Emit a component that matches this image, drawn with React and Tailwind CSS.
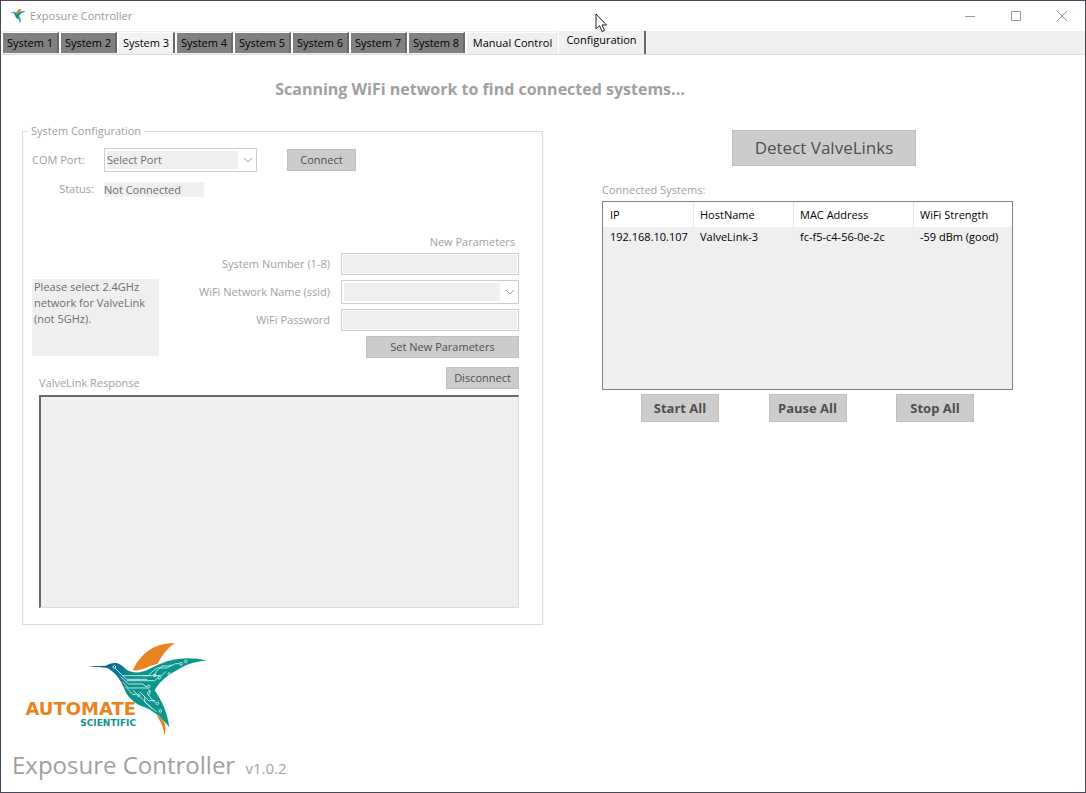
import React from "react";

const SYSTEMS = [1, 2, 3, 4, 5, 6, 7, 8];
const ACTIVE_SYSTEM = 3;

const DEVICES = [
  { ip: "192.168.10.107", host: "ValveLink-3", mac: "fc-f5-c4-56-0e-2c", wifi: "-59 dBm (good)" },
];

function Bird() {
  return (
    <g>
      <path d="M158 91C172 62 192 38 222 22C244 12 264 9 284 9C262 25 246 46 232 72C206 76 190 93 158 91Z" fill="#e8831f" />
      <path d="M229 226C246 234 256 246 256 260C257 270 255 280 254 287C250 264 244 246 229 226Z" fill="#e8831f" />
      <path
        d="M22 79L78 77C88 70 98 68 108 69C128 72 132 88 150 94C186 106 208 84 240 72C280 54 330 49 379 62C345 64 318 72 292 90C262 107 240 122 224 151C244 180 262 216 268 262C252 240 232 222 205 206C174 196 154 184 139 160C128 136 120 108 84 85C68 81 44 82 22 79Z"
        fill="url(#bird)"
      />
    </g>
  );
}

function BirdGradient() {
  return (
    <defs>
      <linearGradient id="bird" x1="22" y1="80" x2="200" y2="130" gradientUnits="userSpaceOnUse">
        <stop offset="0.3" stopColor="#0b669b" />
        <stop offset="0.8" stopColor="#0a958c" />
      </linearGradient>
    </defs>
  );
}

function Logo() {
  return (
    <svg width="200" height="96" viewBox="0 0 200 96" role="img" aria-label="Automate Scientific">
      <BirdGradient />
      <g transform="translate(70 -2) scale(0.3333)">
        <Bird />
        <g fill="none" stroke="#dff3f0" strokeWidth="2.5">
          <path d="M105 84L128 107H222L233 90L246 78H272L286 71H298" />
          <path d="M128 107L140 118H202" />
          <path d="M122 110L145 132H188L196 139H201" />
          <path d="M128 125L145 144H202L212 154H206" />
          <path d="M140 122H224L236 112" />
          <path d="M188 107H206L214 97L232 84H262L276 74" />
          <path d="M222 107H245L258 94" />
          <path d="M136 140L158 163H170" />
          <path d="M158 150L188 178L216 206" />
          <path d="M180 156L206 182H226" />
          <path d="M204 164L224 188" />
          <path d="M194 172V186L230 216" />
          <circle cx="103" cy="81" r="4" />
          <circle cx="303" cy="71" r="4" />
          <circle cx="317" cy="64" r="4" />
          <circle cx="268" cy="102" r="4" />
          <circle cx="224" cy="106" r="4" />
          <circle cx="238" cy="113" r="4" />
          <circle cx="206" cy="139" r="4" />
          <circle cx="206" cy="160" r="4" />
          <circle cx="176" cy="166" r="4" />
          <circle cx="232" cy="190" r="4" />
          <circle cx="241" cy="213" r="4" />
        </g>
      </g>
      <text x="126" y="73" textAnchor="end" className="font-['DejaVu_Sans',sans-serif] text-[18px] font-bold" fill="#e8831f">AUTOMATE</text>
      <text x="126" y="84" textAnchor="end" className="font-['DejaVu_Sans',sans-serif] text-[9px] font-bold" fill="#0a958c">SCIENTIFIC</text>
    </svg>
  );
}

function TitleBar() {
  return (
    <header className="flex h-[30px] items-center bg-white pl-[10px]">
      <svg width="14" height="14" viewBox="22 8 358 282" preserveAspectRatio="none" aria-hidden="true">
        <BirdGradient />
        <g strokeWidth="8" stroke="#1c9aa0">
          <Bird />
        </g>
        <path d="M158 91C172 62 192 38 222 22C244 12 264 9 284 9C262 25 246 46 232 72Z" fill="#e8831f" stroke="#e8831f" strokeWidth="10" />
      </svg>
      <span className="ml-[5px] flex-1 text-[11px] text-[#999999]">Exposure Controller</span>
      <button type="button" aria-label="Minimize" className="flex h-full w-[46px] items-center justify-center text-[#999999]">
        <svg width="10" height="10" stroke="currentColor"><path d="M0 5.5H10" /></svg>
      </button>
      <button type="button" aria-label="Maximize" className="flex h-full w-[46px] items-center justify-center text-[#999999]">
        <svg width="10" height="10" fill="none" stroke="currentColor"><path d="M0.5 0.5H9.5V9.5H0.5Z" /></svg>
      </button>
      <button type="button" aria-label="Close" className="flex h-full w-[46px] items-center justify-center text-[#999999]">
        <svg width="10" height="10" stroke="currentColor"><path d="M0 0L10 10M10 0L0 10" /></svg>
      </button>
    </header>
  );
}

function Tabs() {
  const tab = "mt-px h-[21px] w-[58px] border-t border-r-2 border-l-2 border-t-white border-r-[#696969] border-l-white pb-px whitespace-nowrap text-black";
  return (
    <nav role="tablist" className="flex h-[24px] items-start border-b border-[#dcdcdc] bg-[#efefef]">
      {SYSTEMS.map((n) => (
        <button
          key={n}
          type="button"
          role="tab"
          className={`${tab} ${n === ACTIVE_SYSTEM ? "bg-[#f2f2f2]" : "bg-[#808080]"}`}
        >
          System {n}
        </button>
      ))}
      <button type="button" role="tab" className="mt-px h-[21px] w-[93px] border-t border-l-2 border-white pb-px whitespace-nowrap text-black">
        Manual Control
      </button>
      <button
        type="button"
        role="tab"
        aria-selected="true"
        className="h-[23px] w-[88px] border-r-2 border-l border-r-[#696969] border-l-white pb-[5px] whitespace-nowrap text-black"
      >
        Configuration
      </button>
    </nav>
  );
}

function Button({ className, children }) {
  return (
    <button type="button" className={`border border-[#bfbfbf] bg-[#cccccc] whitespace-nowrap text-[#505050] ${className}`}>
      {children}
    </button>
  );
}

function Combo({ id, value, className }) {
  return (
    <div className={`flex h-[24px] items-center border border-[#cccccc] bg-white p-[2px] ${className}`}>
      <select id={id} disabled className="h-[18px] min-w-0 flex-1 appearance-none bg-[#efefef] text-[#6d6d6d] opacity-100">
        <option>{value}</option>
      </select>
      <svg width="10" height="6" className="mr-px ml-[5px]" fill="none" stroke="#a0a0a0" aria-hidden="true">
        <path d="M1 1L5 5L9 1" />
      </svg>
    </div>
  );
}

function SystemConfiguration() {
  const field = "h-[22px] w-full border border-[#cccccc] bg-[#efefef] px-1 outline outline-white -outline-offset-2";
  return (
    <fieldset className="-mt-[7px] min-w-0 border border-[#dcdcdc] pr-[23px] pb-[16px] pl-[9px]">
      <legend className="-ml-[4px] px-[3px] text-[#a0a0a0]">System Configuration</legend>

      <div className="mt-[9px] flex items-center">
        <label htmlFor="port" className="w-[72px] text-[#a0a0a0]">COM Port:</label>
        <Combo id="port" value="Select Port" className="w-[153px]" />
        <Button className="ml-[30px] h-[22px] w-[69px]">Connect</Button>
      </div>

      <div className="mt-[9px] flex items-center">
        <span className="w-[62px] text-right text-[#a0a0a0]">Status:</span>
        <output className="ml-[10px] h-[15px] w-[100px] bg-[#efefef] leading-[16px] text-[#6d6d6d]">Not Connected</output>
      </div>

      <p className="mt-[37px] pr-1 text-right text-[#a0a0a0]">New Parameters</p>

      <div className="mt-[3px] flex items-center justify-between">
        <p className="mt-[26px] h-[77px] w-[127px] self-start bg-[#efefef] px-[2px] text-[#6d6d6d]">
          Please select 2.4GHz network for ValveLink (not 5GHz).
        </p>
        <div className="grid grid-cols-[auto_178px] items-center gap-x-[11px] gap-y-[5px] text-right">
          <label htmlFor="number" className="text-[#a0a0a0]">System Number (1-8)</label>
          <input id="number" disabled className={field} />
          <label htmlFor="ssid" className="text-[#a0a0a0]">WiFi Network Name (ssid)</label>
          <Combo id="ssid" value="" className="w-full" />
          <label htmlFor="password" className="text-[#a0a0a0]">WiFi Password</label>
          <input id="password" type="password" disabled className={field} />
          <Button className="col-start-2 h-[22px] w-[153px] justify-self-end">Set New Parameters</Button>
        </div>
      </div>

      <div className="mt-[9px] flex items-end justify-between pl-[7px]">
        <label htmlFor="response" className="text-[#a0a0a0]">ValveLink Response</label>
        <Button className="mb-[2px] h-[22px] w-[73px]">Disconnect</Button>
      </div>
      <div className="mt-[4px] pl-[7px]">
        <textarea
          id="response"
          readOnly
          className="block h-[213px] w-full resize-none border-t-2 border-r border-b border-l-2 border-t-[#696969] border-r-[#dcdcdc] border-b-[#dcdcdc] border-l-[#696969] bg-[#efefef]"
        />
      </div>
    </fieldset>
  );
}

function ConnectedSystems() {
  const head = "h-[25px] border-r border-[#e5e5e5] font-normal";
  return (
    <section className="min-w-0">
      <Button className="ml-[130px] block h-[36px] w-[184px] text-[17px]">Detect ValveLinks</Button>
      <h2 className="mt-[16px] text-[#a0a0a0]">Connected Systems:</h2>
      <div className="mt-[3px] h-[189px] border border-[#828282] bg-[#efefef]">
        <table className="w-full table-fixed border-separate border-spacing-0 text-left whitespace-nowrap text-black">
          <thead className="bg-white">
            <tr>
              <th className={`w-[91px] pl-[7px] ${head}`}>IP</th>
              <th className={`w-[100px] pl-[6px] ${head}`}>HostName</th>
              <th className={`w-[120px] pl-[6px] ${head}`}>MAC Address</th>
              <th className="h-[25px] pl-[6px] font-normal">WiFi Strength</th>
            </tr>
          </thead>
          <tbody>
            {DEVICES.map((d) => (
              <tr key={d.ip}>
                <td className="h-[20px] pl-[7px]">{d.ip}</td>
                <td className="pl-[6px]">{d.host}</td>
                <td className="pl-[6px]">{d.mac}</td>
                <td className="pl-[6px]">{d.wifi}</td>
              </tr>
            ))}
          </tbody>
        </table>
      </div>
      <div className="mt-1 flex justify-between px-[39px]">
        <Button className="h-[28px] w-[78px] text-[13px] font-bold">Start All</Button>
        <Button className="h-[28px] w-[78px] text-[13px] font-bold">Pause All</Button>
        <Button className="h-[28px] w-[78px] text-[13px] font-bold">Stop All</Button>
      </div>
    </section>
  );
}

export default function App() {
  return (
    <div className="relative flex min-h-screen flex-col border border-[#4a4956] bg-white font-['Open_Sans',sans-serif] text-[11px] leading-[16px]">
      <TitleBar />
      <Tabs />
      <main className="pr-[72px] pl-[21px]">
        <h1 className="mt-[22px] pr-[75px] text-center text-[16px] leading-[24px] font-bold text-[#a0a0a0]">
          Scanning WiFi network to find connected systems...
        </h1>
        <div className="mt-[29px] grid grid-cols-[521fr_411fr] items-start gap-[59px]">
          <SystemConfiguration />
          <ConnectedSystems />
        </div>
      </main>
      <footer className="mt-[17px] pl-[9px]">
        <Logo />
        <p className="mt-[9px] ml-[2px] text-[24px] leading-[36px] text-[#a0a0a0]">
          Exposure Controller <span className="ml-1 text-[15px]">v1.0.2</span>
        </p>
      </footer>
      <svg className="pointer-events-none absolute top-3 left-[594px]" width="13" height="20" aria-hidden="true">
        <path d="M1 1V16L4.500 12.700L7 18.500L9.500 17.400L7 12H11.500Z" fill="white" stroke="#1f1f2a" />
      </svg>
    </div>
  );
}
